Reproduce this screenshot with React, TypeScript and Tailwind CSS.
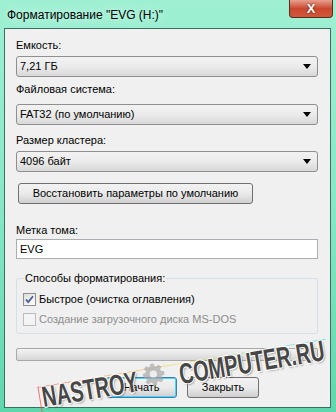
import React from 'react'

const font = { fontFamily: '"Liberation Sans", Arial, sans-serif' }

function Combo({ value }: { value: string }) {
  return (
    <div className="flex h-[21px] items-center justify-between rounded-[3px] border border-[#8e8f8f] bg-gradient-to-b from-[#f2f2f2] via-[#ebebeb] to-[#d8d8d8] pl-[3px] pr-[6px] text-black">
      <span>{value}</span>
      <svg width="8" height="5" viewBox="0 0 8 5">
        <path d="M0 0h8L4 5z" fill="#000" />
      </svg>
    </div>
  )
}

function Button({ label, focused }: { label: string; focused?: boolean }) {
  return (
    <div
      className={
        'flex h-[21px] items-center justify-center overflow-hidden whitespace-nowrap rounded-[3px] border bg-gradient-to-b from-[#f2f2f2] via-[#ebebeb] to-[#cfcfcf] text-black ' +
        (focused ? 'border-[#3c7fb1] shadow-[inset_0_0_0_1px_#48d6f8]' : 'border-[#707070]')
      }
    >
      {label}
    </div>
  )
}

const wmText =
  'inline-block origin-bottom-left scale-x-[0.68] whitespace-nowrap text-[29px] font-bold leading-none text-[#474747] [text-shadow:1px_1px_0_#fff,-1px_-1px_0_#fff,1px_-1px_0_#fff,-1px_1px_0_#fff,2px_2px_2px_rgba(0,0,0,0.3)]'

export default function App() {
  return (
    <div
      className="relative h-[412px] w-[336px] overflow-hidden bg-gradient-to-b from-[#9ff0d3] via-[#86e8c6] to-[#5fd7ad]"
      style={font}
    >
      {/* title bar */}
      <div className="flex h-[28px] items-start justify-between pl-[7px] pr-[3px]">
        <span className="mt-[6px] text-[12px] text-black [text-shadow:0_0_8px_#e8fff6]">Форматирование "EVG (H:)"</span>
        <div className="flex h-[18px] w-[44px] items-center justify-center rounded-b-[4px] border border-t-0 border-[#5a2a1c] bg-gradient-to-b from-[#e8a090] via-[#c9472e] to-[#d2583a]">
          <span className="text-[13px] font-bold leading-none text-white [text-shadow:0_0_2px_#3a1208]">X</span>
        </div>
      </div>

      {/* client area */}
      <div className="ml-[4px] mr-[5px] flex h-[380px] flex-col border border-[#3a6e60] bg-[#f0f0f0] pl-[11px] pr-[12px] pt-[9px] text-[11px] leading-[15px] text-black">
        <div className="h-[15px]">Емкость:</div>
        <div className="mt-[3px]">
          <Combo value="7,21 ГБ" />
        </div>
        <div className="mt-[5px] h-[15px]">Файловая система:</div>
        <div className="mt-[7px]">
          <Combo value="FAT32 (по умолчанию)" />
        </div>
        <div className="mt-[8px] h-[15px]">Размер кластера:</div>
        <div className="mt-[3px]">
          <Combo value="4096 байт" />
        </div>
        <div className="mt-[11px] grid grid-cols-[2px_235px_1fr]">
          <div />
          <Button label="Восстановить параметры по умолчанию" />
        </div>

        <div className="mt-[19px] h-[15px]">Метка тома:</div>
        <div className="mt-[1px] flex h-[20px] items-center border border-[#abadb3] bg-white pl-[3px]">EVG</div>

        {/* group box */}
        <div className="relative mt-[19px] h-[56px] rounded-[3px] border border-[#d5dfe5]">
          <span className="absolute -top-[8px] left-[7px] bg-[#f0f0f0] px-[1px]">Способы форматирования:</span>
          <div className="mt-[13px] ml-[6px] flex items-center gap-[3px]">
            <div className="flex h-[13px] w-[13px] items-center justify-center border border-[#8f8f8f] bg-gradient-to-br from-[#dcdcdc] to-[#ffffff]">
              <svg width="9" height="9" viewBox="0 0 9 9">
                <path d="M1 4.5l2.2 2.6L8 1.2" stroke="#4a5f97" strokeWidth="1.8" fill="none" />
              </svg>
            </div>
            <span>Быстрое (очистка оглавления)</span>
          </div>
          <div className="mt-[5px] ml-[6px] flex items-center gap-[3px] text-[#8d8d8d]">
            <div className="h-[13px] w-[13px] border border-[#bcbcbc] bg-[#f4f4f4]" />
            <span>Создание загрузочного диска MS-DOS</span>
          </div>
        </div>

        {/* progress */}
        <div className="mt-[14px] h-[13px] rounded-[2px] border border-[#a8a8a8] bg-gradient-to-b from-[#f3f3f3] via-[#e6e6e6] to-[#d6d6d6]" />

        <div className="mt-[16px] grid grid-cols-[80px_71px_72px] gap-x-[10px]">
          <div />
          <Button label="Начать" focused />
          <Button label="Закрыть" />
        </div>
      </div>

      {/* watermark */}
      <div className="pointer-events-none absolute left-[45px] top-[384px] h-[30px] w-[290px] origin-bottom-left -rotate-[9.5deg]">
        <div className="absolute -left-[3px] top-[2px] h-[1px] w-[292px] bg-gradient-to-r from-[#ff4040] via-[#f0e040] to-[#40d8f0] opacity-70" />
        <div className="absolute -left-[3px] top-[2px] h-[30px] w-[1px] bg-[#ff4040] opacity-70" />
        <div className="flex h-full items-end">
          <div className="w-[101px] shrink-0">
            <span className={wmText}>NASTROY</span>
          </div>
          <svg width="25" height="25" viewBox="0 0 24 24" className="mb-[9px] shrink-0 opacity-70">
            <path
              d="M10.3 2h3.4l.5 2.6 1.8.8 2.2-1.5 2.4 2.4-1.5 2.2.8 1.8 2.6.5v3.4l-2.6.5-.8 1.8 1.5 2.2-2.4 2.4-2.2-1.5-1.8.8-.5 2.6h-3.4l-.5-2.6-1.8-.8-2.2 1.5-2.4-2.4 1.5-2.2-.8-1.8L2 13.7v-3.4l2.6-.5.8-1.8-1.5-2.2 2.4-2.4 2.2 1.5 1.8-.8z"
              fill="#a8a8a8"
            />
            <circle cx="12" cy="12" r="3.5" fill="#ececec" />
          </svg>
          <div className="ml-[13px] w-[150px] shrink-0">
            <span className={wmText}>COMPUTER.RU</span>
          </div>
        </div>
      </div>
    </div>
  )
}
